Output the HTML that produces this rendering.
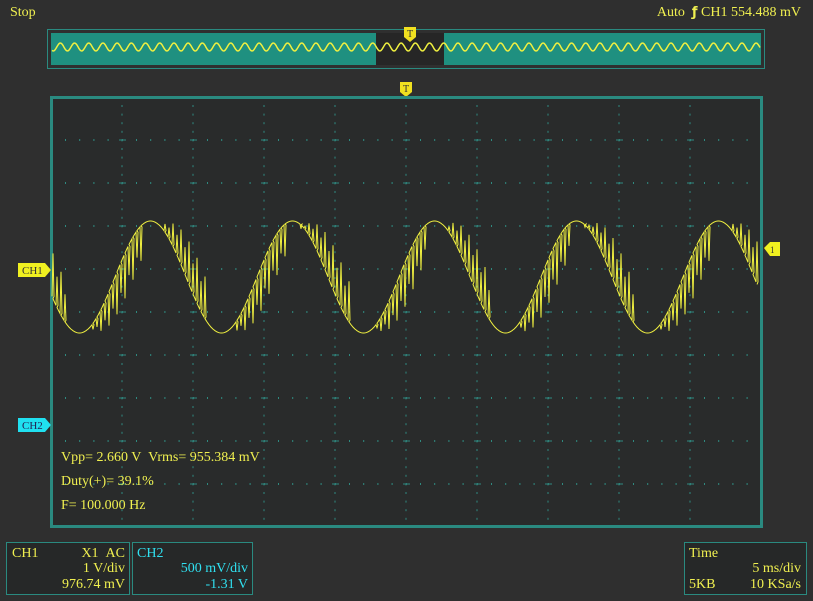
<!DOCTYPE html><html><head><style>
body{margin:0;width:813px;height:601px;background:#2f2f2f;overflow:hidden;font-family:"Liberation Serif",serif;color:#f0f050;font-size:14px;position:relative}
.a{position:absolute;white-space:nowrap}
.box{position:absolute;border:1px solid #2a8a80;background:#262828;box-sizing:border-box}
</style></head><body>
<div class="a" style="left:10px;top:5px">Stop</div>
<div class="a" style="right:12px;top:5px">Auto &nbsp;<span style="font-family:'DejaVu Sans';font-weight:bold;font-size:13px">&#x0192;</span> CH1 554.488 mV</div>
<svg width="813" height="601" style="position:absolute;left:0;top:0">
<rect x="47.5" y="29.5" width="717" height="39" fill="none" stroke="#2a8a80"/>
<rect x="51" y="33" width="710" height="32" fill="#1f9080"/>
<rect x="376" y="33" width="68" height="32" fill="#262626"/>
<path id="mini" fill="none" stroke="#f0f040" stroke-width="1.5"/>
<path d="M404 27h12v10l-6 5-6-5z" fill="#f0e020"/><text x="410" y="37" font-size="10" fill="#333" text-anchor="middle">T</text>
<path d="M400 82h12v10l-6 5-6-5z" fill="#f0e020"/><text x="406" y="92" font-size="10" fill="#333" text-anchor="middle">T</text>
<rect x="52" y="98" width="709" height="428" fill="#292b2b"/>
<g id="grid"></g>
<rect x="51.5" y="97.5" width="710" height="429" fill="none" stroke="#2a8a80" stroke-width="3"/>
<path id="wave" fill="none" stroke="#f0f040" stroke-width="1"/>
<path d="M18 263h27l6 7-6 7h-27z" fill="#f0f020"/><text x="22" y="274" font-size="11" fill="#333">CH1</text>
<path d="M18 418h27l6 7-6 7h-27z" fill="#20e0f0"/><text x="22" y="429" font-size="11" fill="#225">CH2</text>
<path d="M764 248l6-6h10v14h-10z" fill="#f0f020"/><text x="770" y="253" font-size="9" fill="#333">1</text>
</svg>
<div class="a" style="left:61px;top:450px">Vpp= 2.660 V &nbsp;Vrms= 955.384 mV</div>
<div class="a" style="left:61px;top:474px">Duty(+)= 39.1%</div>
<div class="a" style="left:61px;top:498px">F= 100.000 Hz</div>
<div class="box" style="left:6px;top:542px;width:124px;height:53px"><div class="a" style="left:5px;top:3px">CH1</div><div class="a" style="right:4px;top:3px">X1 &nbsp;AC</div><div class="a" style="right:4px;top:18px">1 V/div</div><div class="a" style="right:4px;top:34px">976.74 mV</div></div>
<div class="box" style="left:132px;top:542px;width:121px;height:53px;color:#30e0f0"><div class="a" style="left:4px;top:3px">CH2</div><div class="a" style="right:4px;top:18px">500 mV/div</div><div class="a" style="right:4px;top:34px">-1.31 V</div></div>
<div class="box" style="left:684px;top:542px;width:123px;height:53px"><div class="a" style="left:4px;top:3px">Time</div><div class="a" style="right:5px;top:18px">5 ms/div</div><div class="a" style="left:4px;top:34px">5KB</div><div class="a" style="right:5px;top:34px">10 KSa/s</div></div>
<script>
var g='',c='#2f8a80';
for(var i=1;i<10;i++){var x=51+i*71;for(var y=105;y<526;y+=8.6)g+='<rect x="'+(x-0.5)+'" y="'+y+'" width="1" height="2" fill="'+c+'"/>';}
for(var j=1;j<10;j++){var y=97+j*43;for(var x=65;x<760;x+=14.2)g+='<rect x="'+x+'" y="'+(y-1)+'" width="1" height="2" fill="'+c+'"/>';for(var i=1;i<10;i++){var x=51+i*71;g+='<rect x="'+(x-3)+'" y="'+(y-0.5)+'" width="7" height="1" fill="'+c+'"/>';}}
document.getElementById('grid').innerHTML=g;
var d='';
function f(x){return 277-56*Math.sin(2*Math.PI*(x-115)/142)}
for(var x=52;x<=757;x+=1){var y=f(x),ph=((x-115)%142+142)%142;var yy=y;
if(x%4==0){var k=(x%8)?0.9:0.6;
 if(ph>116||ph<28||(ph>42&&ph<92)){yy=y+k*(f(x-20)-y);}}
d+=(x==52?'M':'L')+x+' '+y.toFixed(1);if(Math.abs(yy-y)>1)d+='L'+(x+1)+' '+yy.toFixed(1)+'L'+(x+2)+' '+y.toFixed(1);}
document.getElementById('wave').setAttribute('d',d);
var m='';for(var x=52;x<=760;x++){m+=(x==52?'M':'L')+x+' '+(47-4*Math.sin(2*Math.PI*x/14.2)).toFixed(1);}
document.getElementById('mini').setAttribute('d',m);
</script>
</body></html>
